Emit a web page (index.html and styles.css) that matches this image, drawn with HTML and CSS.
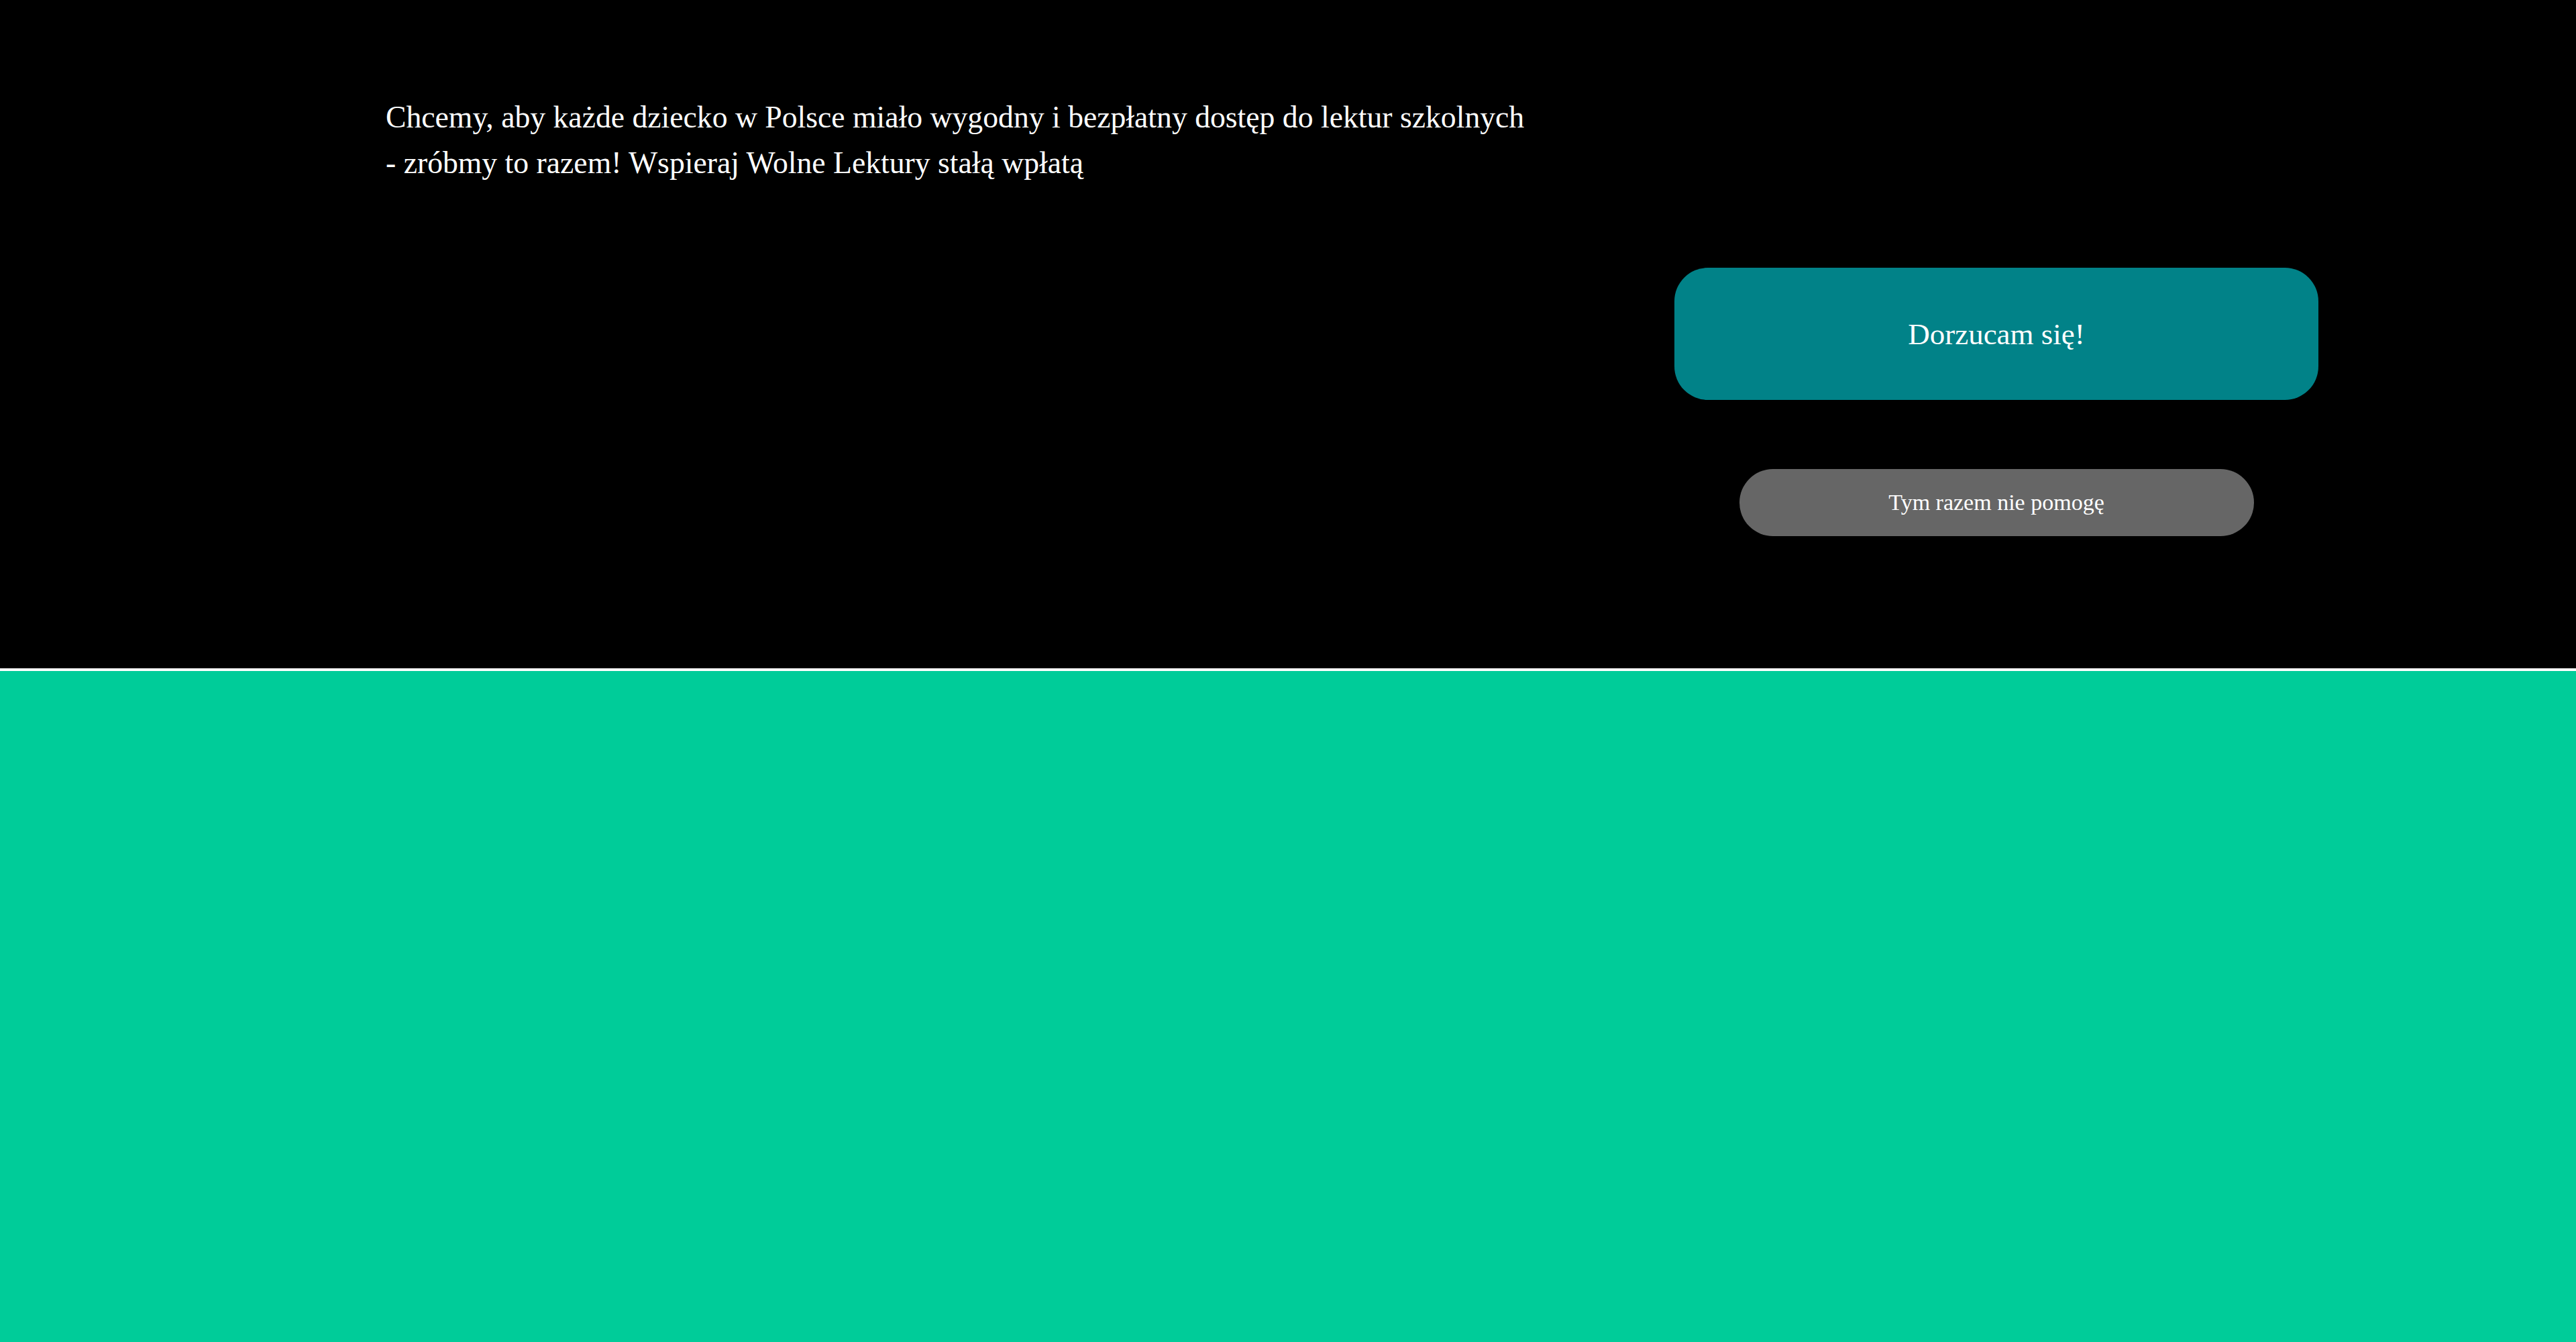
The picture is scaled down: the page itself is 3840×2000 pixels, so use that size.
FILE: index.html
```html
<!DOCTYPE html>
<html lang="pl">
<head>
<meta charset="utf-8">
<title>Wolne Lektury</title>
<link rel="stylesheet" href="styles.css">
</head>
<body>
<section class="banner">
  <div class="banner-text">
    <p>Chcemy, aby każde dziecko w Polsce miało wygodny i bezpłatny dostęp do lektur szkolnych - zróbmy to razem! Wspieraj Wolne Lektury stałą wpłatą</p>
  </div>
  <div class="banner-actions">
    <a class="btn-primary" href="#">Dorzucam się!</a>
    <a class="btn-secondary" href="#">Tym razem nie pomogę</a>
  </div>
</section>
<main class="rest"></main>
</body>
</html>
```
FILE: styles.css
```css
html, body {
  margin: 0;
  padding: 0;
  height: 100%;
}
body {
  background: #00cc99;
  font-family: "Liberation Serif", "DejaVu Serif", serif;
  color: #fff;
}
.banner {
  background: #000;
  box-sizing: border-box;
  border-bottom: 4px solid #fff;
  height: 1000px;
  display: flex;
  padding: 0 384px 0 575px;
}
.banner-text {
  width: 1716px;
  padding-top: 141px;
}
.banner-text p {
  margin: 0;
  font-size: 45.7px;
  line-height: 68px;
}
.banner-actions {
  margin-left: auto;
  width: 960px;
  display: flex;
  flex-direction: column;
  align-items: center;
  padding-top: 399px;
}
.btn-primary {
  display: flex;
  align-items: center;
  justify-content: center;
  width: 960px;
  height: 197px;
  border-radius: 50px;
  background: #018288;
  color: #fff;
  text-decoration: none;
  font-size: 45px;
}
.btn-secondary {
  margin-top: 103px;
  display: flex;
  align-items: center;
  justify-content: center;
  width: 767px;
  height: 100px;
  border-radius: 50px;
  background: #666;
  color: #fff;
  text-decoration: none;
  font-size: 34px;
}
```
